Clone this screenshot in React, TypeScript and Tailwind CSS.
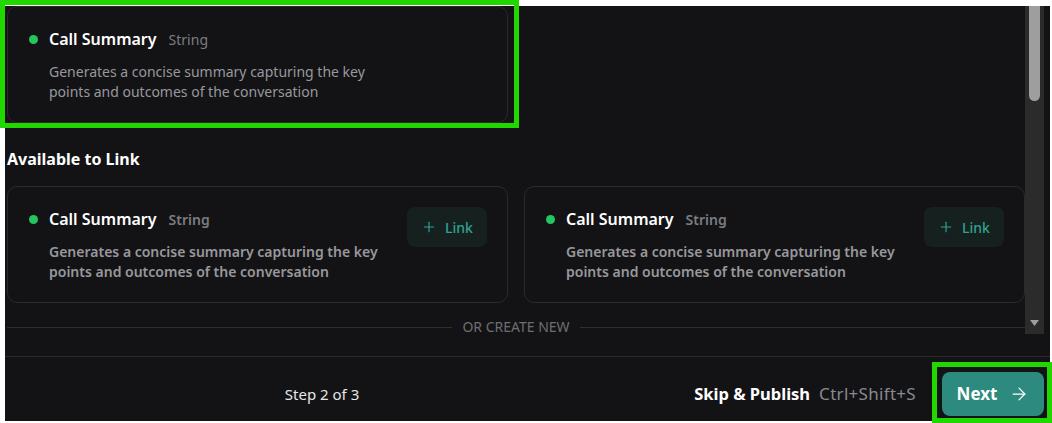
import React from 'react';
import { Plus, ArrowRight } from 'lucide-react';

const DESC = 'Generates a concise summary capturing the key points and outcomes of the conversation';

// Single output field card
const FieldCard: React.FC<{ linkable?: boolean; strong?: boolean }> = ({ linkable, strong }) => {
  return (
    <div className="rounded-[10px] border border-[#2a2a2e] bg-[#131316] pl-[21px] pr-5 py-5 flex items-start justify-between">
      <div>
        <div className="flex items-center h-6">
          <span className="w-[9px] h-[9px] rounded-full bg-[#22c55e]" />
          <span className="ml-[11px] text-[16px] font-semibold text-white leading-6">Call Summary</span>
          <span className={`ml-3 text-[14px] text-[#7c7c80] ${strong ? 'font-semibold' : 'font-normal'}`}>String</span>
        </div>
        <p className={`mt-[11px] ml-5 max-w-[340px] text-[14px] leading-5 text-[#98989c] ${strong ? 'font-semibold' : 'font-normal'}`}>
          {DESC}
        </p>
      </div>
      {linkable && (
        <button className="w-20 h-10 rounded-lg bg-[#16211f] text-[#2fa390] text-[14px] font-medium flex items-center justify-center gap-2">
          <Plus className="w-4 h-4" strokeWidth={1.75} />
          Link
        </button>
      )}
    </div>
  );
};

const App: React.FC = () => {
  return (
    <div className="relative w-[1052px] h-[423px] bg-white font-['Noto_Sans','Open_Sans',sans-serif] overflow-hidden">
      <div className="ml-[5px] mt-[6px] w-[1045px] h-[415px] bg-[#131316] flex flex-col">
        {/* Scroll area */}
        <div className="h-[328px] flex pl-[2px] pr-[6px]">
          <div className="flex-1">
            <div className="grid grid-cols-2 gap-4">
              <FieldCard />
            </div>

            <h3 className="mt-[24px] text-[16px] leading-6 font-bold text-white">Available to Link</h3>

            <div className="mt-[15px] grid grid-cols-2 gap-4">
              <FieldCard linkable strong />
              <FieldCard linkable strong />
            </div>

            <div className="mt-[14px] flex items-center gap-[10px]">
              <div className="flex-1 h-px bg-[#2e2e32]" />
              <span className="text-[14px] leading-5 text-[#6e6e72]">OR CREATE NEW</span>
              <div className="flex-1 h-px bg-[#2e2e32]" />
            </div>
          </div>

          {/* Scrollbar */}
          <div className="w-[19px] bg-[#2b2b2b] flex flex-col items-center justify-between">
            <div className="w-[11px] h-[95px] rounded-b-full bg-[#9e9e9e]" />
            <svg width="9" height="6" viewBox="0 0 9 6" className="mb-[8px]">
              <path d="M0 0 L9 0 L4.5 6 Z" fill="#9e9e9e" />
            </svg>
          </div>
        </div>

        {/* Footer */}
        <div className="mt-[22px] border-t border-[#2a2a2e] flex-1 flex items-center pt-[10px] pr-[6px]">
          <div className="w-[634px] text-center text-[15px] text-[#e6e6e6]">Step 2 of 3</div>
          <div className="ml-auto flex items-center">
            <span className="text-[16.5px] font-bold text-white">Skip &amp; Publish</span>
            <span className="ml-[9px] text-[17px] tracking-[0.3px] text-[#8a8a8e]">Ctrl+Shift+S</span>
            <button className="ml-[26px] w-[102px] h-[44px] rounded-lg bg-[#2d8a7e] text-white text-[17px] font-bold flex items-center justify-center gap-3">
              Next
              <ArrowRight className="w-5 h-5" strokeWidth={1.5} />
            </button>
          </div>
        </div>
      </div>

      {/* Annotation frames */}
      <div className="absolute left-0 top-0 w-[519px] h-[128px] border-[5px] border-[#22d600] pointer-events-none" />
      <div className="absolute left-[932px] top-[362px] w-[120px] h-[61px] border-[5px] border-[#22d600] pointer-events-none" />
    </div>
  );
};

export default App;
